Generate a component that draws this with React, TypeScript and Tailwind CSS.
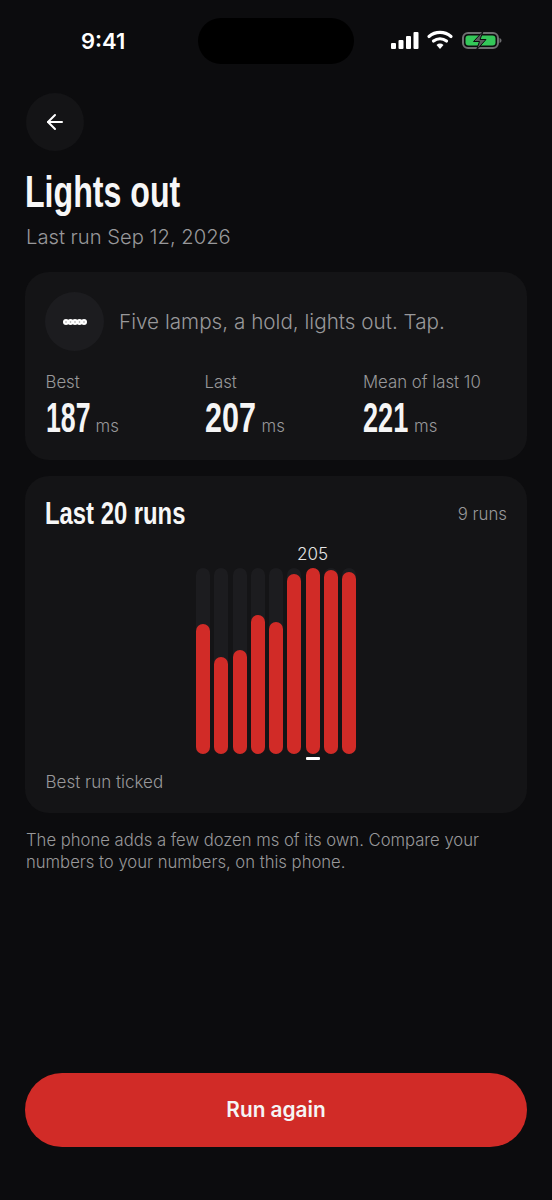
import { ArrowLeft } from "lucide-react";

const sans = "font-['Inter','Noto_Sans',sans-serif]";
const cond = "font-['Liberation_Sans',sans-serif]";

const bars = [130, 97, 104, 139, 132, 180, 186, 184, 182];

function Stat({ label, value, width, numWidth, squeeze }: { label: string; value: string; width: string; numWidth: string; squeeze: string }) {
  return (
    <div className={width}>
      <div className="text-[16.800px] leading-[20px] font-light text-[#98989a]">{label}</div>
      <div className="mt-[1px] flex items-baseline">
        <span className={`${numWidth} block`}>
          <span className={`${cond} ${squeeze} block origin-left text-[43px] leading-[48px] font-bold text-[#f5f5f5]`}>{value}</span>
        </span>
        <span className="ml-[6px] text-[16.800px] font-light text-[#98989a]">ms</span>
      </div>
    </div>
  );
}

export default function App() {
  return (
    <div className={`${sans} flex h-[1200px] w-[552px] flex-col overflow-hidden bg-[#0c0c0e] px-[25px]`}>
      <div className="relative -mx-[25px] h-[93px] shrink-0">
        <span className="absolute left-[81px] top-[27px] text-[22px] leading-[28px] font-semibold text-white">9:41</span>
        <div className="absolute left-[198px] top-[18px] h-[46px] w-[156px] rounded-full bg-black" />
        <svg className="absolute left-[390px] top-[30px]" width="112" height="21" viewBox="0 0 112 21">
          <rect x="1" y="13" width="5" height="6" rx="1" fill="#fff" />
          <rect x="8.500" y="10" width="5" height="9" rx="1" fill="#fff" />
          <rect x="16" y="6" width="5" height="13" rx="1" fill="#fff" />
          <rect x="23.500" y="2" width="5" height="17" rx="1" fill="#fff" />
          <path d="M39 6.500a17 17 0 0 1 22 0" fill="none" stroke="#fff" strokeWidth="3.200" strokeLinecap="round" />
          <path d="M43.500 11a10.500 10.500 0 0 1 13 0" fill="none" stroke="#fff" strokeWidth="3.200" strokeLinecap="round" />
          <path d="M46.500 15l3.500 4 3.500-4a5.500 5.500 0 0 0-7 0z" fill="#fff" />
          <rect x="73" y="3" width="35" height="15" rx="5" fill="none" stroke="#6e6e70" strokeWidth="2" />
          <rect x="75.500" y="5.500" width="30" height="10" rx="3" fill="#34c759" />
          <path d="M109.500 8v5c1.300-.4 2-1.400 2-2.500s-.7-2.100-2-2.500z" fill="#6e6e70" />
          <path d="M93 1.500l-9.500 10h6l-3 8.500 9.500-10.500h-6z" fill="#5c5c5e" stroke="#0c0c0e" strokeWidth="1" />
        </svg>
      </div>

      <button className="flex h-[58px] w-[58px] shrink-0 translate-x-[1px] items-center justify-center rounded-full bg-[#141416] text-white">
        <ArrowLeft size={24} strokeWidth={2} />
      </button>

      <h1 className={`${cond} mt-[17px] origin-left scale-x-[0.73] text-[44px] leading-[48px] font-bold whitespace-nowrap text-[#f7f7f7]`}>Lights out</h1>
      <p className="mt-[6px] pl-[1px] text-[20.200px] leading-[30px] font-light text-[#98989a]">Last run Sep 12, 2026</p>

      <section className="mt-[20px] h-[188px] shrink-0 rounded-[24px] bg-[#141416] px-[20px] pt-[20px]">
        <div className="flex items-center gap-[15px]">
          <div className="flex h-[59px] w-[59px] items-center justify-center rounded-full bg-[#1c1c1f]">
            <svg width="26" height="8" viewBox="0 0 26 8">
              {[4, 8.500, 13, 17.500, 22].map((x) => (
                <circle key={x} cx={x} cy="4" r="3" fill="#fff" />
              ))}
              {[4, 8.500, 13, 17.500, 22].map((x) => (
                <circle key={x} cx={x} cy="4" r="0.800" fill="#9a9a9a" />
              ))}
            </svg>
          </div>
          <p className="text-[20.700px] leading-[30px] font-light text-[#98989a]">Five lamps, a hold, lights out. Tap.</p>
        </div>
        <div className="mt-[21px] flex pl-[0.500px]">
          <Stat label="Best" value="187" width="w-[159px]" numWidth="w-[44px]" squeeze="scale-x-[0.62]" />
          <Stat label="Last" value="207" width="w-[158.500px]" numWidth="w-[51px]" squeeze="scale-x-[0.71]" />
          <Stat label="Mean of last 10" value="221" width="w-[140px]" numWidth="w-[45px]" squeeze="scale-x-[0.63]" />
        </div>
      </section>

      <section className="mt-[16px] h-[337px] shrink-0 rounded-[24px] bg-[#141416] px-[20px] pt-[17px]">
        <div className="flex items-center justify-between">
          <h2 className={`${cond} origin-left scale-x-[0.745] text-[32px] leading-[40px] font-bold whitespace-nowrap text-[#f7f7f7]`}>Last 20 runs</h2>
          <span className="pt-[3px] text-[16.800px] font-light text-[#98989a]">9 runs</span>
        </div>
        <div className="relative mx-auto mt-[35px] flex h-[186px] w-[160px] justify-between">
          {bars.map((h, i) => (
            <div key={i} className="relative h-full w-[14px] rounded-full bg-[#1c1c1f]">
              <div className="absolute bottom-0 w-full rounded-full bg-[#d12b27]" style={{ height: h }} />
              {i === 6 && (
                <>
                  <span className="absolute -top-[26px] left-1/2 -translate-x-1/2 text-[17px] leading-[24px] font-light text-[#e6e6e6]">205</span>
                  <span className="absolute -bottom-[6px] left-0 h-[3px] w-[14px] rounded-[1px] bg-white" />
                </>
              )}
            </div>
          ))}
        </div>
        <p className="mt-[18px] pl-[0.500px] text-[17px] leading-[20px] font-light text-[#98989a]">Best run ticked</p>
      </section>

      <p className="mt-[16px] pl-[1px] text-[16.650px] leading-[22px] font-light text-[#98989a]">
        The phone adds a few dozen ms of its own. Compare your numbers to your numbers, on this phone.
      </p>

      <div className="flex-1" />
      <button className="mb-[53px] h-[74px] w-full shrink-0 rounded-full bg-[#d12b27] text-[20.800px] font-semibold text-[#f5f5f5]">
        Run again
      </button>
    </div>
  );
}
